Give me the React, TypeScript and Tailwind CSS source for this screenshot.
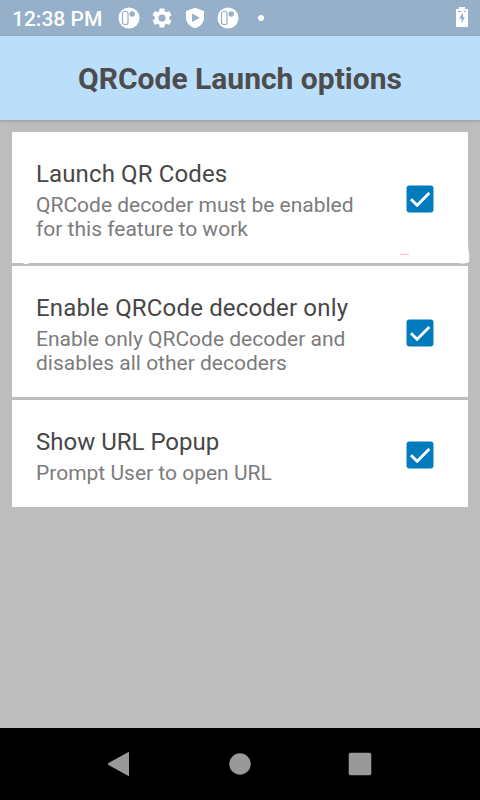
const options = [
  { title: 'Launch QR Codes', tracking: 'tracking-[0.13px]', summary: 'QRCode decoder must be enabled for this feature to work' },
  { title: 'Enable QRCode decoder only', tracking: 'tracking-[0.17px]', summary: 'Enable only QRCode decoder and disables all other decoders' },
  { title: 'Show URL Popup', tracking: 'tracking-normal', summary: 'Prompt User to open URL' },
];

function AppBadge() {
  return (
    <svg width="22" height="22" viewBox="0 0 22 22">
      <circle cx="11" cy="11" r="10.5" fill="#fff" />
      <rect x="4.500" y="4.500" width="5.500" height="13" rx="2" fill="#fff" stroke="#95b0c8" strokeWidth="1.200" />
      <circle cx="14.200" cy="7" r="2.700" fill="#95b0c8" />
    </svg>
  );
}

function Gear() {
  return (
    <svg width="24" height="24" viewBox="0 0 24 24" fill="#fff">
      <path d="M19.14 12.94c.04-.3.06-.61.06-.94 0-.32-.02-.64-.07-.94l2.03-1.58c.18-.14.23-.41.12-.61l-1.92-3.32c-.12-.22-.37-.29-.59-.22l-2.39.96c-.5-.38-1.03-.7-1.62-.94l-.36-2.54c-.04-.24-.24-.41-.48-.41h-3.84c-.24 0-.43.17-.47.41l-.36 2.54c-.59.24-1.13.57-1.62.94l-2.39-.96c-.22-.08-.47 0-.59.22L2.74 8.87c-.12.21-.08.47.12.61l2.03 1.58c-.05.3-.09.63-.09.94s.02.64.07.94l-2.03 1.58c-.18.14-.23.41-.12.61l1.92 3.32c.12.22.37.29.59.22l2.39-.96c.5.38 1.03.7 1.62.94l.36 2.54c.05.24.24.41.48.41h3.84c.24 0 .44-.17.47-.41l.36-2.54c.59-.24 1.13-.56 1.62-.94l2.39.96c.22.08.47 0 .59-.22l1.92-3.32c.12-.22.07-.47-.12-.61l-2.01-1.58zM12 15.6A3.6 3.6 0 1 1 12 8.4a3.6 3.6 0 0 1 0 7.2z" />
    </svg>
  );
}

function Shield() {
  return (
    <svg width="20" height="22" viewBox="0 0 20 22">
      <path d="M10 .8 19 4v6.4c0 5.2-3.7 9.3-9 10.8-5.3-1.5-9-5.6-9-10.8V4z" fill="#fff" />
      <path d="M7 6.500v8.400l7.800-4.200z" fill="#95b0c8" />
    </svg>
  );
}

function Check() {
  return (
    <svg className="shrink-0" width="28" height="28" viewBox="0 0 28 28">
      <rect x=".5" y=".5" width="27" height="27" rx="3" fill="#007cbe" />
      <path d="M5 14.200 11.100 20.200 23.300 7.900" fill="none" stroke="#fff" strokeWidth="2.900" />
    </svg>
  );
}

export default function App() {
  return (
    <div className="relative flex h-[800px] w-[480px] flex-col overflow-hidden bg-[#bdbdbd] font-[Roboto,sans-serif]">
      <div className="flex h-9 shrink-0 items-center bg-[#95b0c8] pl-3 pr-[12px] text-white">
        <span className="w-[106px] shrink-0 whitespace-nowrap pt-px text-[21px] font-medium leading-9">12:38 PM</span>
        <div className="flex items-center">
          <AppBadge />
          <div className="ml-[10px] flex"><Gear /></div>
          <div className="ml-[11px] flex"><Shield /></div>
          <div className="ml-3 flex"><AppBadge /></div>
          <div className="ml-[19px] size-[6px] rounded-full bg-white" />
        </div>
        <svg className="mb-0.5 ml-auto" width="12" height="20" viewBox="0 0 12 20">
          <path d="M3 0h6v2h3v18H0V2h3z" fill="#fff" />
          <path d="M7 5.500 3 11.500H5.500v4.500L9 10H7z" fill="#95b0c8" />
          <path d="M2 4.500h3M8 4.500h2" stroke="#95b0c8" />
        </svg>
      </div>
      <header className="z-10 flex h-[84px] shrink-0 items-center justify-center bg-[#bbdefb] pt-0.5 shadow-[0_1px_3px_rgba(0,0,0,0.2)]">
        <h1 className="text-[30px] font-bold leading-9 text-[#4d4d4d]">QRCode Launch options</h1>
      </header>
      <main className="flex flex-1 flex-col gap-[3px] px-3 pt-3">
        {options.map((o) => (
          <section key={o.title} className="flex items-center justify-between bg-white pb-[22px] pl-6 pr-[34px] pt-[25px]">
            <div className="flex w-[330px] flex-col">
              <h2 className={`h-9 text-[24px] leading-[34px] text-[#474747] ${o.tracking}`}>{o.title}</h2>
              <p className="text-[21px] leading-6 text-[#7c7c7c]">{o.summary}</p>
            </div>
            <Check />
          </section>
        ))}
      </main>
      <nav className="flex h-[72px] shrink-0 items-center justify-center bg-black">
        <svg width="264" height="30" viewBox="0 0 264 30" fill="#999">
          <path d="M20 3.200Q21 2.500 21 4V26Q21 27.500 20 26.800L.5 16Q-.8 15 .5 14z" />
          <circle cx="132" cy="15" r="10.700" />
          <rect x="240.700" y="3.700" width="22.600" height="22.600" rx="2" />
        </svg>
      </nav>
      <svg className="absolute left-0 top-[240px]" width="480" height="26">
        <path d="M400 14.500q4-1 9 0" fill="none" stroke="#f9b8b8" />
        <path d="M468 0q.2 6 .3 10 1.500 2 .7 12-5 3-10 1V0z" fill="#fff" />
        <ellipse cx="26" cy="23" rx="3" ry="1" fill="#fff" />
      </svg>
    </div>
  );
}
